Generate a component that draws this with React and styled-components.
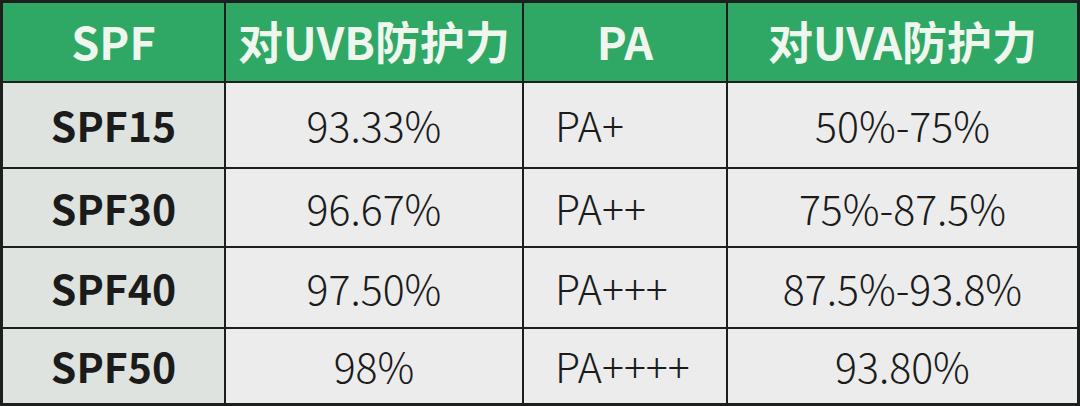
import React from "react";
import styled, { createGlobalStyle } from "styled-components";

const Global = createGlobalStyle`
  html, body { margin: 0; padding: 0; background: #1c1f1d; }
  body { width: 1080px; height: 406px; overflow: hidden; font-family: "Noto Sans CJK SC", "Noto Sans", sans-serif; }
`;

const Table = styled.div`
  box-sizing: border-box;
  width: 1080px;
  height: 406px;
  padding: 3px;
  background: #1c1f1d;
  display: grid;
  grid-template-columns: 221px 296px 202px 349px;
  grid-template-rows: 78px 84px 77px 79px 74px;
  gap: 2px;
`;

const HeadCell = styled.div`
  background: #2fa866;
  color: #eef6ee;
  font-size: 45px;
  font-weight: 700;
  display: flex;
  align-items: center;
  justify-content: center;
  padding-bottom: 4px;
  box-sizing: border-box;
`;

const Cell = styled.div`
  background: ${(p) => (p.$first ? "#dfe3df" : "#ececec")};
  color: #1b1b1b;
  font-size: 41px;
  font-weight: ${(p) => (p.$first ? 700 : 300)};
  display: flex;
  align-items: center;
  justify-content: ${(p) => (p.$left ? "flex-start" : "center")};
  padding-left: ${(p) => (p.$left ? "31px" : "0")};
  padding-bottom: 2px;
  box-sizing: border-box;
`;

const headers = ["SPF", "对UVB防护力", "PA", "对UVA防护力"];
const rows = [
  ["SPF15", "93.33%", "PA+", "50%-75%"],
  ["SPF30", "96.67%", "PA++", "75%-87.5%"],
  ["SPF40", "97.50%", "PA+++", "87.5%-93.8%"],
  ["SPF50", "98%", "PA++++", "93.80%"],
];

export default function App() {
  return (
    <>
      <Global />
      <Table>
        {headers.map((h) => (
          <HeadCell key={h}>{h}</HeadCell>
        ))}
        {rows.map((r) =>
          r.map((c, i) => (
            <Cell key={r[0] + i} $first={i === 0} $left={i === 2}>
              {c}
            </Cell>
          ))
        )}
      </Table>
    </>
  );
}
